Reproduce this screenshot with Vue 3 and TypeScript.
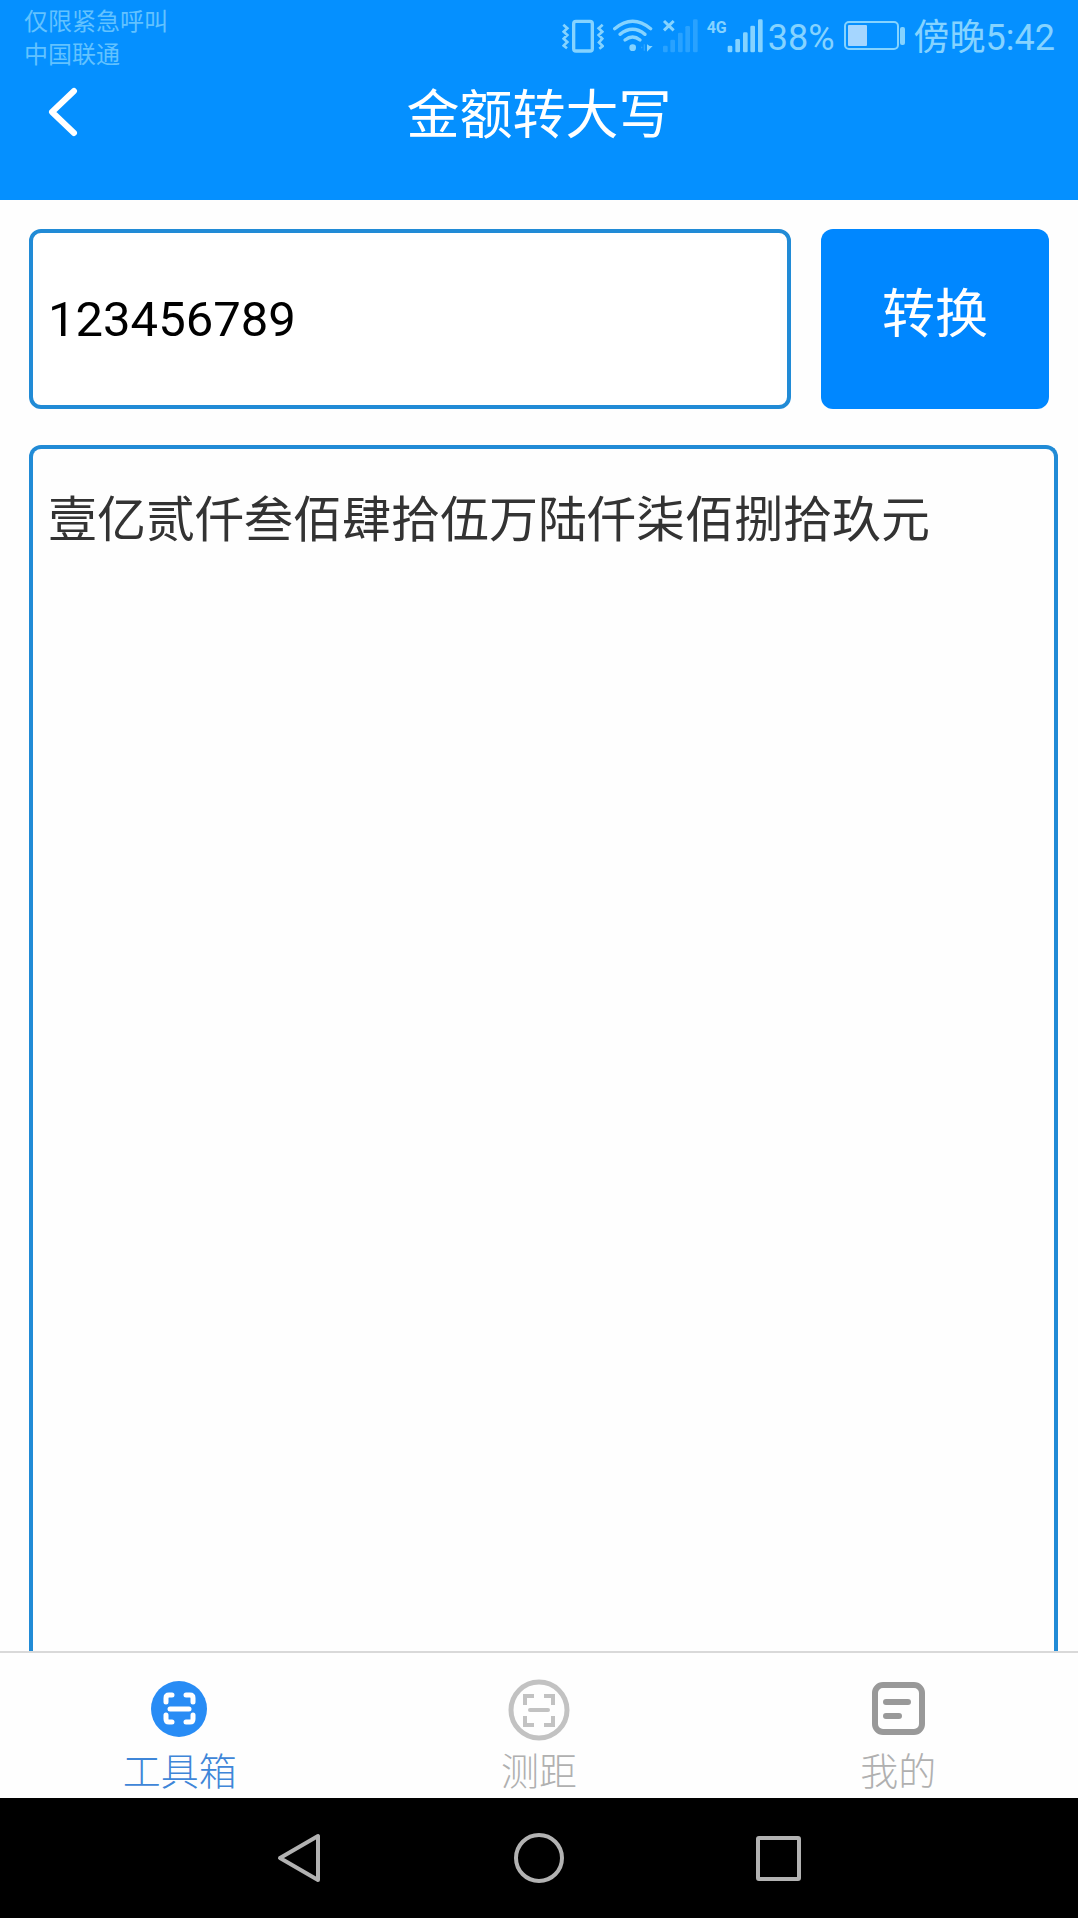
<script setup lang="ts">
import { ref } from 'vue'

type TabId = 'tools' | 'measure' | 'mine'

interface Tab {
  id: TabId
  label: string
}

const tabs: Tab[] = [
  { id: 'tools', label: '工具箱' },
  { id: 'measure', label: '测距' },
  { id: 'mine', label: '我的' },
]

const activeTab = ref<TabId>('tools')
const amount = ref('123456789')

const DIGITS = '零壹贰叁肆伍陆柒捌玖'
const UNITS = ['', '拾', '佰', '仟']
const GROUPS = ['', '万', '亿', '万亿']

// Converts an integer amount to formal Chinese numerals, four digits at a time.
function toCapital(value: string): string {
  const clean = value.replace(/\D/g, '').replace(/^0+/, '').slice(0, 16)
  if (!clean) return '零元'
  let out = ''
  let zero = false
  let groupUsed = false
  for (let i = 0; i < clean.length; i++) {
    const place = clean.length - 1 - i
    const digit = Number(clean[i])
    if (digit === 0) {
      zero = true
    } else {
      if (zero && out) out += DIGITS[0]
      zero = false
      groupUsed = true
      out += DIGITS[digit] + UNITS[place % 4]
    }
    if (place % 4 === 0) {
      if (groupUsed) out += GROUPS[place / 4]
      groupUsed = false
    }
  }
  return out + '元'
}

const result = ref(toCapital(amount.value))

function convert(): void {
  result.value = toCapital(amount.value)
}
</script>

<template>
  <div class="screen">
    <header class="header">
      <div class="status">
        <div class="carrier">
          <span>仅限紧急呼叫</span>
          <span>中国联通</span>
        </div>
        <div class="indicators">
          <svg class="vibrate" viewBox="60 58 126 102" fill="none" stroke="currentColor" aria-hidden="true">
            <rect x="95" y="65" width="56" height="89" rx="7" stroke-width="10" />
            <path d="M64 75l12 11-11 10 11 10-11 11 11 10-11 11 10 8M182 75l-12 11 11 10-11 10 11 11-10 11 11 11-10 8" stroke-width="8" />
          </svg>
          <svg class="wifi" viewBox="214 58 120 102" fill="none" stroke="currentColor" aria-hidden="true">
            <path d="M219 87Q273 42 327 87" stroke-width="10" stroke-linecap="round" />
            <path d="M235 104Q273 74 310 104" stroke-width="10" stroke-linecap="round" />
            <path d="M250 121Q273 103 295 121" stroke-width="10" stroke-linecap="round" />
            <circle cx="273" cy="144" r="10" fill="currentColor" stroke="none" />
            <path d="M316 134v22l17-17h-9z" fill="currentColor" stroke="none" />
            <path d="M308 134v19M300 141v5" stroke-width="4" opacity=".3" />
          </svg>
          <svg class="bars" viewBox="360 56 108 102" fill="currentColor" aria-hidden="true">
            <g opacity=".28">
              <rect x="363" y="136" width="14" height="20" rx="4" />
              <rect x="385" y="118" width="14" height="38" rx="4" />
              <rect x="408" y="97" width="14" height="59" rx="4" />
              <rect x="430" y="77" width="14" height="79" rx="4" />
              <rect x="453" y="57" width="14" height="99" rx="4" />
            </g>
            <path d="M366 62l29 28M395 62l-29 28" stroke="currentColor" stroke-width="9" />
          </svg>
          <div class="mobile">
            <span class="network">4G</span>
            <svg class="bars" viewBox="555 56 108 102" fill="currentColor" aria-hidden="true">
              <rect x="557" y="136" width="14" height="20" rx="4" />
              <rect x="580" y="116" width="14" height="40" rx="4" />
              <rect x="603" y="96" width="14" height="60" rx="4" />
              <rect x="625" y="76" width="14" height="80" rx="4" />
              <rect x="648" y="57" width="14" height="99" rx="4" />
            </svg>
            <span class="level">38%</span>
          </div>
          <svg class="battery" viewBox="0 0 61 30" aria-hidden="true">
            <rect x="1" y="1" width="53" height="27" rx="4" fill="none" stroke="currentColor" stroke-width="2" />
            <rect x="4" y="4" width="19" height="21" rx="1" fill="#a5d6ff" />
            <rect x="56" y="6" width="5" height="18" rx="2" fill="currentColor" />
          </svg>
          <span class="clock">傍晚5:42</span>
        </div>
      </div>
      <div class="titlebar">
        <button class="back" type="button" aria-label="返回">
          <svg viewBox="0 0 30 50" fill="none" stroke="#fff" stroke-width="6" stroke-linecap="round" stroke-linejoin="round" aria-hidden="true">
            <path d="M26 4L4 25l22 21" />
          </svg>
        </button>
        <h1>金额转大写</h1>
      </div>
    </header>

    <main class="content">
      <form class="entry" @submit.prevent="convert">
        <input id="amount" v-model="amount" class="amount" type="text" inputmode="numeric" aria-label="金额" />
        <button class="convert" type="submit">转换</button>
      </form>
      <output class="result" for="amount">{{ result }}</output>
    </main>

    <nav class="tabs">
      <button
        v-for="tab in tabs"
        :key="tab.id"
        type="button"
        class="tab"
        :class="{ active: tab.id === activeTab }"
        @click="activeTab = tab.id"
      >
        <svg v-if="tab.id === 'tools'" viewBox="0 0 62 62" fill="none" stroke-linecap="round" aria-hidden="true">
          <circle cx="30" cy="30" r="28" fill="#288cf5" />
          <path d="M17 23v-4q0-3 3-3h3M37 16h4q3 0 3 3v4M44 36v4q0 3-3 3h-4M23 43h-3q-3 0-3-3v-4" stroke="#fff" stroke-width="5" />
          <path d="M21 30h19" stroke="#fff" stroke-width="5" />
        </svg>
        <svg v-else-if="tab.id === 'measure'" viewBox="0 0 62 62" fill="none" stroke="#c2c2c2" aria-hidden="true">
          <circle cx="31" cy="31" r="28" stroke-width="5" />
          <path d="M17 26v-9h9M36 17h9v9M45 37v9h-9M26 46h-9v-9" stroke-width="4" />
          <path d="M22 31h18" stroke-width="4" stroke-linecap="round" />
        </svg>
        <svg v-else viewBox="0 0 62 62" fill="none" stroke="#999" stroke-width="6" stroke-linecap="round" aria-hidden="true">
          <rect x="8" y="6" width="47" height="47" rx="8" />
          <path d="M19 23h22M19 37h13" />
        </svg>
        <span>{{ tab.label }}</span>
      </button>
    </nav>

    <div class="system">
      <button type="button" aria-label="返回键">
        <svg viewBox="0 0 50 50" aria-hidden="true"><path d="M43 3v44L5 25z" /></svg>
      </button>
      <button type="button" aria-label="主屏幕">
        <svg viewBox="0 0 50 50" aria-hidden="true"><circle cx="25" cy="25" r="23" /></svg>
      </button>
      <button type="button" aria-label="最近任务">
        <svg viewBox="0 0 50 50" aria-hidden="true"><rect x="5" y="5" width="41" height="41" rx="1" /></svg>
      </button>
    </div>
  </div>
</template>

<style>
body {
  margin: 0;
  background: #fefefe;
}
</style>

<style scoped>
.screen {
  display: flex;
  flex-direction: column;
  min-height: 100vh;
  font-family: Roboto, "Noto Sans CJK SC", sans-serif;
  background: #fefefe;
}

button {
  margin: 0;
  padding: 0;
  border: 0;
  background: none;
  font-family: inherit;
}

svg {
  display: block;
  flex: none;
}

.header {
  padding-bottom: 44px;
  background: #0590ff;
}

.status {
  display: flex;
  justify-content: space-between;
  height: 72px;
  padding: 0 23px 0 24px;
  color: #85d3ff;
}

.carrier {
  display: flex;
  flex-direction: column;
  padding-top: 6px;
  color: #62c2ff;
  font-size: 24px;
  line-height: 33px;
}

.indicators {
  display: flex;
  align-items: center;
  gap: 9px;
  font-size: 36px;
  line-height: 68px;
  white-space: nowrap;
}

.vibrate {
  width: 42px;
  height: 34px;
}

.wifi {
  width: 40px;
  height: 34px;
}

.bars {
  width: 36px;
  height: 34px;
}

.mobile {
  display: flex;
  align-items: center;
}

.network {
  align-self: flex-start;
  padding-top: 20px;
  font-size: 16px;
  font-weight: 700;
  line-height: 16px;
}

.level {
  padding: 4px 0 0 5px;
}

.clock {
  padding-top: 4px;
}

.battery {
  width: 61px;
  height: 30px;
}

.titlebar {
  display: grid;
  grid-template-columns: 1fr auto 1fr;
  align-items: center;
  height: 84px;
}

.back {
  justify-self: start;
  padding: 10px 48px 14px;
}

.back svg {
  width: 30px;
  height: 50px;
}

h1 {
  margin: 0;
  padding-top: 4px;
  color: #fff;
  font-size: 53px;
  font-weight: 400;
  line-height: 80px;
}

.content {
  display: flex;
  flex: 1;
  flex-direction: column;
  gap: 36px;
  padding: 29px 20px 0 29px;
}

.entry {
  display: flex;
  gap: 30px;
  height: 180px;
  padding-right: 9px;
}

.amount {
  flex: 1;
  min-width: 0;
  box-sizing: border-box;
  padding: 0 15px;
  border: 4px solid #218bd6;
  border-radius: 12px;
  outline: 0;
  background: #fff;
  color: #000;
  font-family: inherit;
  font-size: 49px;
}

.convert {
  width: 228px;
  padding-bottom: 18px;
  border-radius: 12px;
  background: #0087ff;
  color: #fff;
  font-size: 53px;
}

.result {
  display: block;
  flex: 1;
  padding: 36px 15px;
  border: 4px solid #218bd6;
  border-bottom: 0;
  border-radius: 12px 12px 0 0;
  color: #333;
  font-size: 49px;
  line-height: 72px;
  overflow-wrap: anywhere;
}

.tabs {
  display: grid;
  grid-template-columns: repeat(3, 1fr);
  height: 145px;
  border-top: 2px solid #d9d9d9;
}

.tab {
  display: flex;
  flex-direction: column;
  align-items: center;
  justify-content: flex-start;
  padding-top: 26px;
  color: #b0b0b0;
  font-size: 38px;
  font-weight: 300;
  line-height: 56px;
}

.tab span {
  padding-top: 3px;
}

.tab.active {
  color: #3f86d8;
}

.tab svg {
  width: 62px;
  height: 62px;
}

.system {
  display: flex;
  justify-content: center;
  align-items: center;
  gap: 189px;
  height: 120px;
  background: #000;
}

.system svg {
  width: 50px;
  height: 50px;
  fill: none;
  stroke: #b2b2b2;
  stroke-width: 4px;
  stroke-linejoin: round;
}
</style>
